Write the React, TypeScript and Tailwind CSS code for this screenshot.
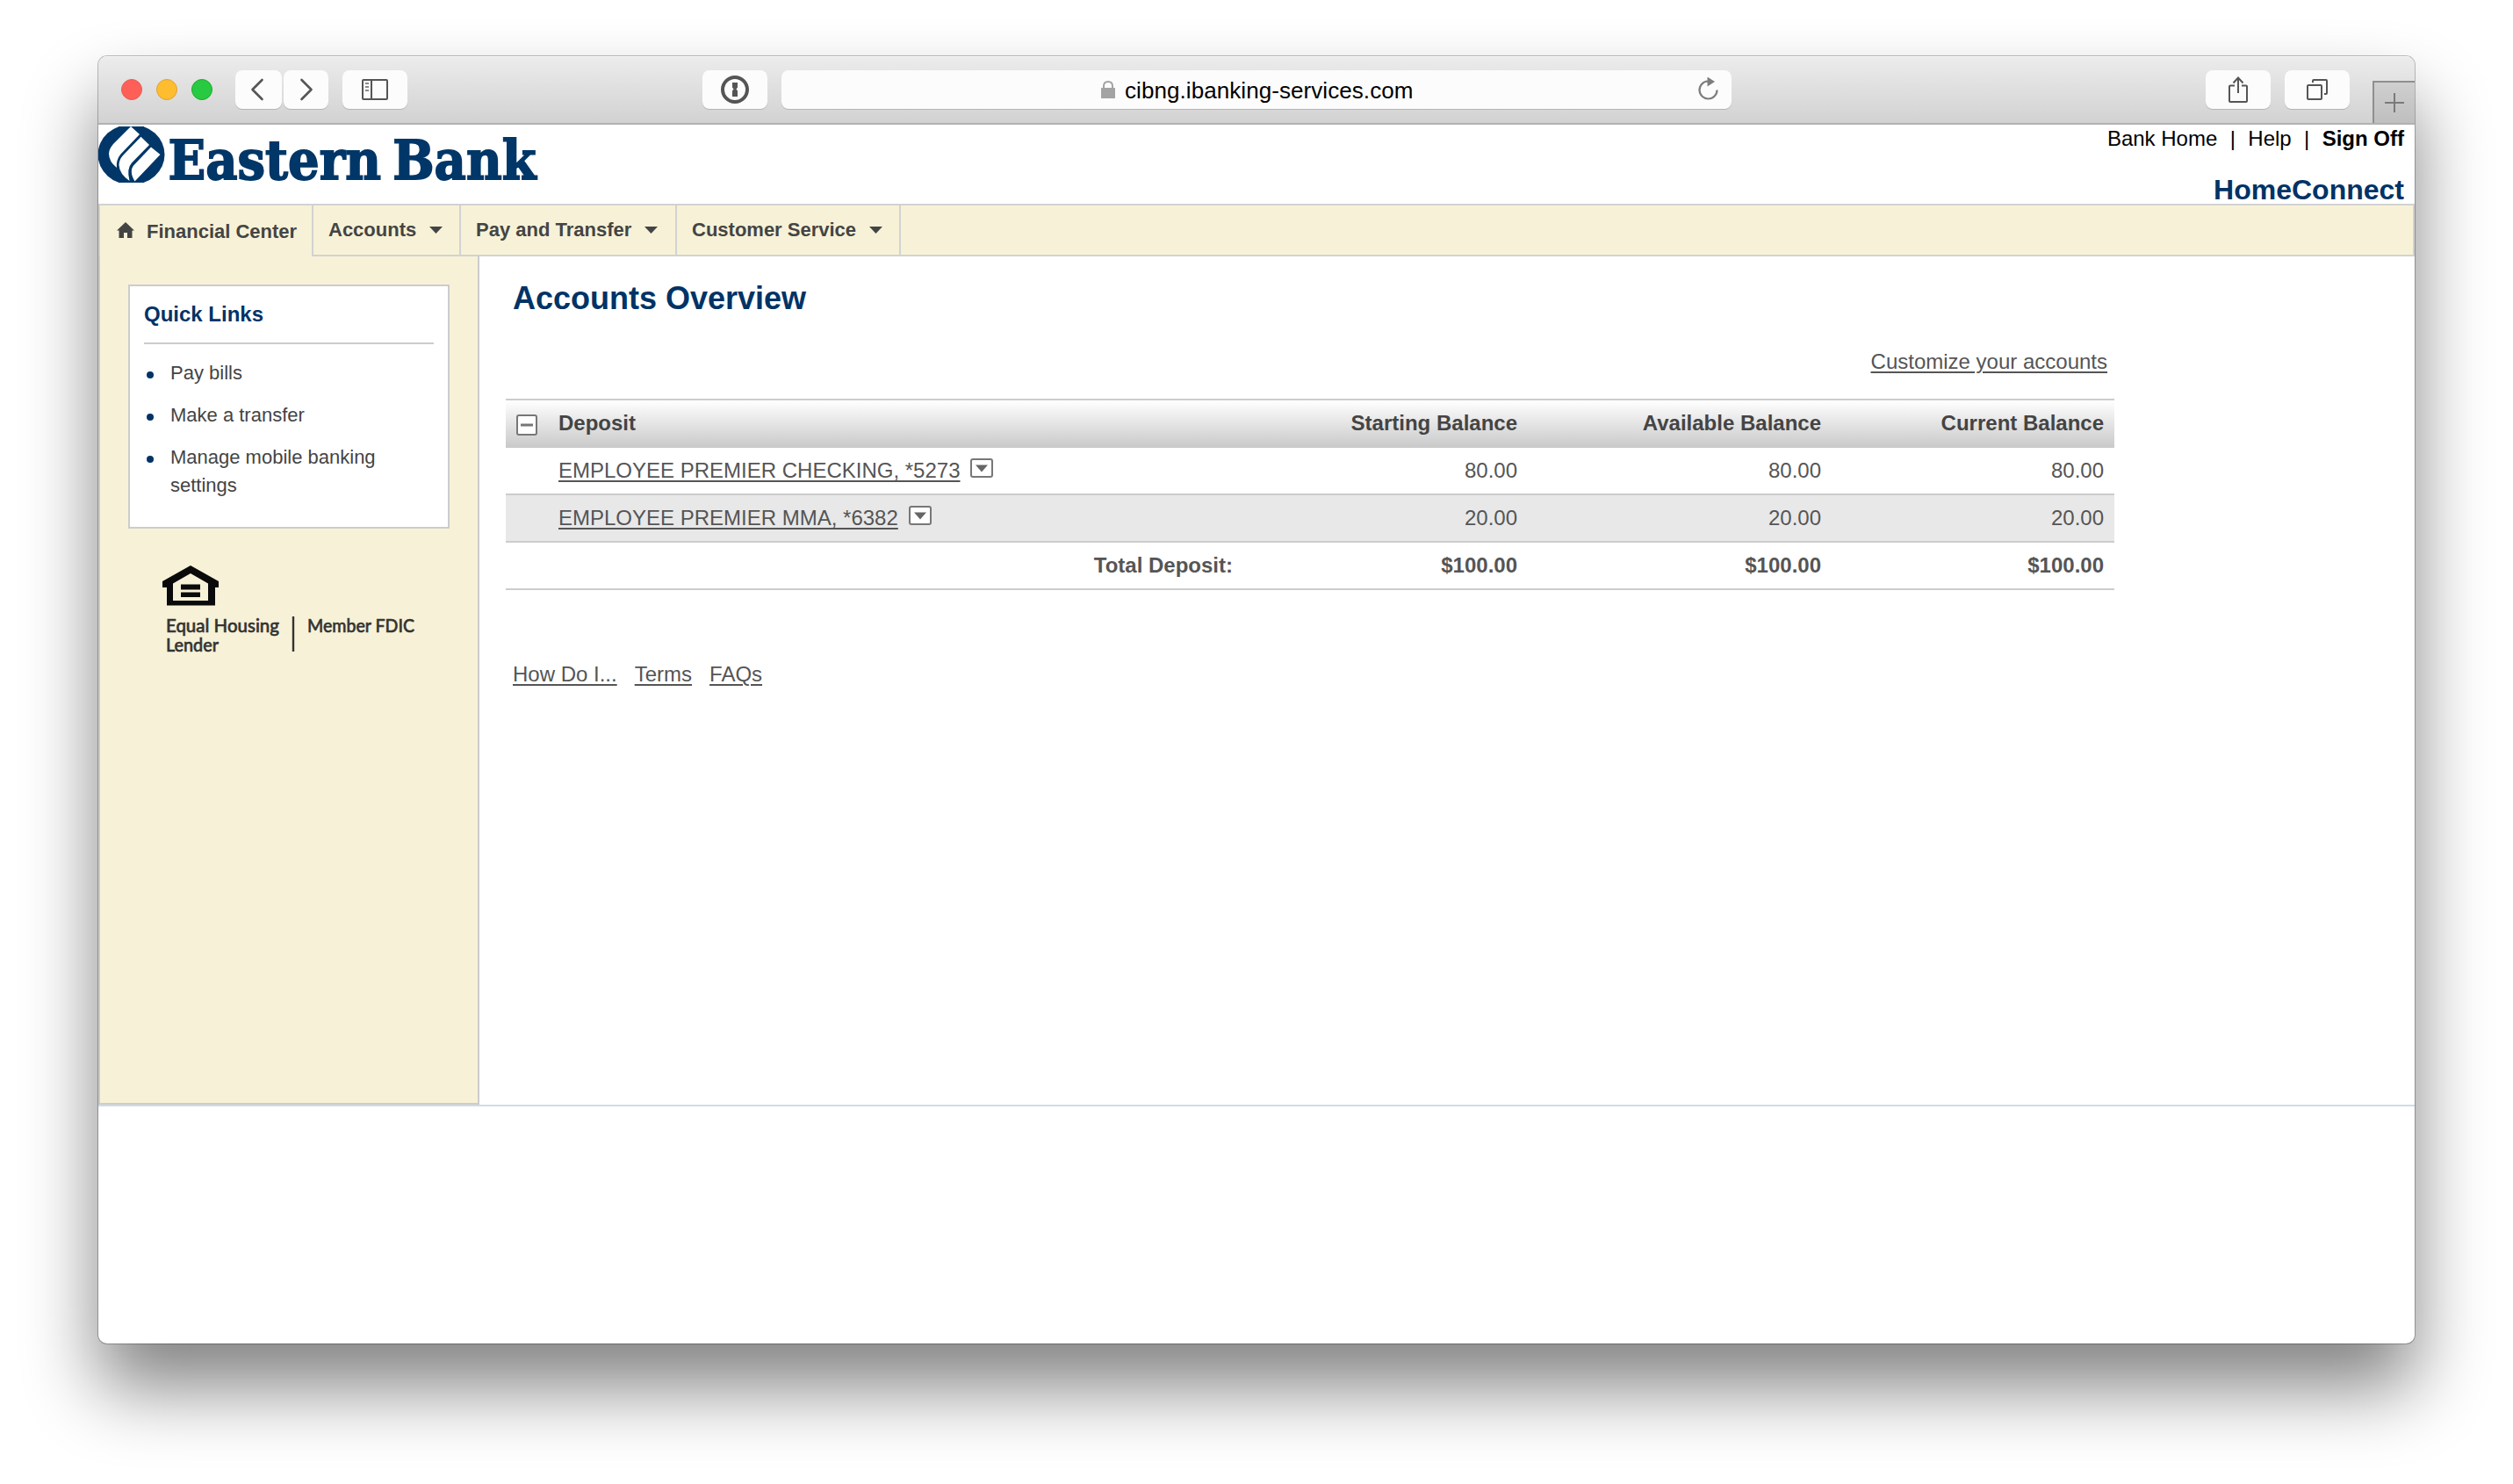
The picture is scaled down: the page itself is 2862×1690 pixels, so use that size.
import type { ReactNode } from "react"
import clsx from "clsx"

const quickLinks = ["Pay bills", "Make a transfer", "Manage mobile banking settings"]

const accounts = [
  { name: "EMPLOYEE PREMIER CHECKING, *5273", starting: "80.00", available: "80.00", current: "80.00" },
  { name: "EMPLOYEE PREMIER MMA, *6382", starting: "20.00", available: "20.00", current: "20.00" },
]

const tableGrid = "grid grid-cols-[840px_324px_346px_322px]"

function ToolbarButton({ className, children }: { className: string; children: ReactNode }) {
  return (
    <button
      className={clsx(
        "flex h-11 items-center justify-center rounded-[8px] bg-[#fcfcfc] shadow-[0_1px_0_#b4b4b4]",
        className
      )}
    >
      {children}
    </button>
  )
}

function Toolbar() {
  return (
    <div className="flex h-[78px] items-start border-b-2 border-[#b1b1b1] bg-gradient-to-b from-[#ececec] to-[#d2d2d2] shadow-[inset_0_1px_0_#f6f6f6]">
      {/* Window controls */}
      <div className="mt-[26px] ml-[26px] flex gap-4">
        <span className="size-6 rounded-full border border-[#ec5a52] bg-[#fe5f57]" />
        <span className="size-6 rounded-full border border-[#dfa236] bg-[#febd2e]" />
        <span className="size-6 rounded-full border border-[#1cab2c] bg-[#28ca41]" />
      </div>

      <div className="mt-4 ml-[26px] flex gap-[2px]">
        <ToolbarButton className="w-[53px] pr-[3px]">
          <svg width="16" height="26" viewBox="0 0 16 26" fill="none" stroke="#555" strokeWidth="2.6" strokeLinecap="round" strokeLinejoin="round">
            <path d="M13.5 2 L2.5 13 L13.5 24" />
          </svg>
        </ToolbarButton>
        <ToolbarButton className="w-[51px]">
          <svg width="16" height="26" viewBox="0 0 16 26" fill="none" stroke="#555" strokeWidth="2.6" strokeLinecap="round" strokeLinejoin="round">
            <path d="M2.5 2 L13.5 13 L2.5 24" />
          </svg>
        </ToolbarButton>
      </div>

      <ToolbarButton className="mt-4 ml-4 w-[74px]">
        <svg width="30" height="24" viewBox="0 0 30 24" fill="none" stroke="#555" strokeWidth="2">
          <rect x="1" y="1" width="28" height="22" rx="1" />
          <path d="M11 1 V23" />
          <path d="M4 5 H8 M4 9 H8 M4 13 H8" stroke="#8a8a8a" />
        </svg>
      </ToolbarButton>

      <ToolbarButton className="mt-4 ml-[336px] w-[74px]">
        <svg width="32" height="32" viewBox="0 0 32 32">
          <circle cx="16" cy="16" r="14" fill="none" stroke="#555" strokeWidth="4" />
          <path d="M13 8 H19 V13.5 L17.5 15.5 L19 17.5 V24 H13 V17.5 L14.5 15.5 L13 13.5 Z" fill="#555" />
        </svg>
      </ToolbarButton>

      {/* Address bar */}
      <div className="mt-4 ml-4 flex h-11 w-[1082px] items-center rounded-[8px] bg-[#fcfcfc] shadow-[0_1px_0_#b4b4b4]">
        <svg className="ml-[364px]" width="16" height="20" viewBox="0 0 16 20">
          <path d="M3 9 V6 Q3 1 8 1 Q13 1 13 6 V9" fill="none" stroke="#a3a3a3" strokeWidth="2" />
          <rect x="0" y="8" width="16" height="12" fill="#a3a3a3" />
        </svg>
        <span className="ml-[11px] w-[640px] pt-[2px] text-[26px] leading-[32px] tracking-[0.07px] text-black">
          cibng.ibanking-services.com
        </span>
        <svg className="ml-[13px]" width="24" height="28" viewBox="0 0 24 28">
          <path d="M11.5 6 A10 10 0 1 0 22 16" transform="translate(-0.5 -1.5)" fill="none" stroke="#7d7d7d" strokeWidth="2.2" />
          <path d="M10.5 -0.5 L19 5 L10.5 10.5 Z" fill="#7d7d7d" />
        </svg>
      </div>

      <ToolbarButton className="mt-4 ml-auto w-[74px]">
        <svg width="22" height="30" viewBox="0 0 22 30" fill="none" stroke="#555" strokeWidth="2">
          <path d="M7 10.5 H2 Q1 10.5 1 11.5 V28 Q1 29 2 29 H20 Q21 29 21 28 V11.5 Q21 10.5 20 10.5 H15" />
          <path d="M11 19 V1.5 M5.5 7.5 L11 1.5 L16.5 7.5" />
        </svg>
      </ToolbarButton>
      <ToolbarButton className="mt-4 ml-4 w-[74px]">
        <svg width="24" height="24" viewBox="0 0 24 24" fill="none" stroke="#555" strokeWidth="2">
          <rect x="1" y="7" width="16" height="16" rx="1" />
          <path d="M7 4 V2 Q7 1 8 1 H22 Q23 1 23 2 V16 Q23 17 22 17 H20" />
        </svg>
      </ToolbarButton>

      {/* New tab */}
      <button className="mt-7 ml-[26px] flex h-12 w-12 items-center justify-center border-t-2 border-l-2 border-[#8f8f8f] bg-gradient-to-b from-[#cfcfcf] to-[#bfbfbf]">
        <svg width="22" height="22" viewBox="0 0 22 22" stroke="#7a7a7a" strokeWidth="2">
          <path d="M11 0 V22 M0 11 H22" />
        </svg>
      </button>
    </div>
  )
}

function BankLogo() {
  return (
    <svg className="mt-[2px] overflow-visible" width="510" height="86" viewBox="0 0 510 86">
      <clipPath id="emblem">
        <rect x="0" y="0" width="76" height="64" />
      </clipPath>
      <g clipPath="url(#emblem)">
        <ellipse cx="37.5" cy="32" rx="38" ry="34.5" fill="#003768" />
        <g fill="#fff">
          <path d="M37 0 L47 9 L25.5 31.5 Q20 38 21 47 Q12 40 12 31 Q12 26 17 20 Z" />
          <path d="M48.5 11.7 L58 21 L38 41.5 Q32 48 35.5 62 Q24 54 23.5 44 Q23.5 38 28 33 Z" />
          <path d="M60 23.5 L70.5 32 L41.5 62.5 Q34 50 41.5 43 Z" />
        </g>
      </g>
      <text
        x="79.5"
        y="60"
        textLength="419"
        lengthAdjust="spacingAndGlyphs"
        stroke="#003768"
        strokeWidth="1.8"
        className="fill-[#003768] font-['DejaVu_Serif',serif] text-[62px] font-bold [word-spacing:-7px]"
      >
        Eastern Bank
      </text>
    </svg>
  )
}

function Caret() {
  return (
    <svg width="15" height="8" viewBox="0 0 15 8" className="shrink-0">
      <path d="M0 0 H15 L7.5 8 Z" fill="#444" />
    </svg>
  )
}

function NavItem({ className, children }: { className: string; children: ReactNode }) {
  return (
    <button className={clsx("flex items-center gap-[15px] border-r-2 border-b-2 border-[#d2d2d2] pb-[1px] font-bold whitespace-nowrap", className)}>
      {children}
      <Caret />
    </button>
  )
}

function NavBar() {
  return (
    <nav className="flex h-[60px] border-t-2 border-[#d2d2d2] bg-[#f7f2d7] text-[22px] leading-[28px] text-[#444]">
      <button className="flex w-[243px] items-center border-l-2 border-[#d2d2d2] pt-[1px] pl-[19px] font-bold whitespace-nowrap">
        <svg width="20" height="18" viewBox="0 0 20 18" className="mb-1">
          <path d="M10 0 L20 9.5 H17.5 V18 H12 V12 H8 V18 H2.5 V9.5 H0 Z" fill="#444" />
        </svg>
        <span className="ml-[14px]">Financial Center</span>
      </button>
      <NavItem className="w-[170px] border-l-2 pl-[17px]">Accounts</NavItem>
      <NavItem className="w-[246px] pl-[17px]">Pay and Transfer</NavItem>
      <NavItem className="w-[255px] pl-[17px]">Customer Service</NavItem>
      <div className="flex-1 border-r-2 border-b-2 border-[#d2d2d2]" />
    </nav>
  )
}

function Sidebar() {
  return (
    <aside className="h-[966px] w-[434px] border-x-2 border-b-2 border-[#ccc] bg-[#f7f2d7] px-8 pt-8">
      <div className="h-[278px] w-[366px] border-2 border-[#ccc] bg-white px-4 pt-4 text-[#444]">
        <h2 className="h-[50px] border-b-2 border-[#ccc] text-2xl leading-8 font-bold text-[#036]">Quick Links</h2>
        <ul className="mt-[17px] flex flex-col gap-4 text-[22px] leading-8">
          {quickLinks.map((link) => (
            <li key={link} className="flex items-start pl-[3px]">
              <span className="mt-[14px] mr-[19px] size-2 shrink-0 rounded-full bg-[#036]" />
              <a>{link}</a>
            </li>
          ))}
        </ul>
      </div>

      {/* Equal housing lender mark */}
      <svg className="mt-[42px] ml-[39px] overflow-visible" width="290" height="112" viewBox="0 0 290 112">
        <path
          fillRule="evenodd"
          fill="#0a0a0a"
          d="M32 0 L64 18 V25 H60 V45.5 H5 V25 H0 V18 Z M32 9 L12 20.5 V40 H52 V20.5 Z"
        />
        <path d="M21 21.5 H43 V27.5 H21 Z M21 30.5 H43 V36 H21 Z" fill="#0a0a0a" />
        <g className="fill-[#333] font-[Lato,sans-serif] text-[22px] font-medium" stroke="#333" strokeWidth="0.6">
          <text x="4" y="76" textLength="129" lengthAdjust="spacingAndGlyphs">Equal Housing</text>
          <text x="4" y="98" textLength="60" lengthAdjust="spacingAndGlyphs">Lender</text>
          <text x="165" y="76" textLength="122" lengthAdjust="spacingAndGlyphs">Member FDIC</text>
        </g>
        <path d="M149 58 V98" stroke="#333" strokeWidth="2.4" />
      </svg>
    </aside>
  )
}

function AccountsTable() {
  return (
    <div className="w-[1832px] border-t-2 border-[#ccc] text-2xl leading-8 text-[#555]">
      <div className={clsx(tableGrid, "h-[54px] items-center bg-gradient-to-b from-white to-[#c9c9c9] pb-[2px] text-right font-bold text-[#444]")}>
        <div className="flex items-center pl-3">
          <svg width="24" height="24" viewBox="0 0 24 24" className="mt-[3px] mr-6">
            <rect x="1" y="1" width="22" height="22" rx="2" fill="#fff" stroke="#777" strokeWidth="2" />
            <path d="M5 12 H19" stroke="#777" strokeWidth="3" />
          </svg>
          Deposit
        </div>
        <div className="pr-3">Starting Balance</div>
        <div className="pr-3">Available Balance</div>
        <div className="pr-3">Current Balance</div>
      </div>
      {accounts.map((account, i) => (
        <div
          key={account.name}
          className={clsx(tableGrid, "h-[54px] items-center border-b-2 border-[#ccc] text-right", i % 2 === 1 && "bg-[#e8e8e8]")}
        >
          <div className="flex items-center pl-[60px]">
            <a className="underline decoration-[1.5px] underline-offset-[3px]">{account.name}</a>
            <svg width="26" height="22" viewBox="0 0 26 22" className="mb-[6px] ml-3">
              <rect x="1" y="1" width="24" height="20" rx="2" fill="#fff" stroke="#777" strokeWidth="2" />
              <path d="M6 7.5 H20 L13 15.5 Z" fill="#666" />
            </svg>
          </div>
          <div className="pr-3">{account.starting}</div>
          <div className="pr-3">{account.available}</div>
          <div className="pr-3">{account.current}</div>
        </div>
      ))}
      <div className={clsx(tableGrid, "h-[54px] items-center border-b-2 border-[#ccc] text-right font-bold")}>
        <div className="pr-3">Total Deposit:</div>
        <div className="pr-3">$100.00</div>
        <div className="pr-3">$100.00</div>
        <div className="pr-3">$100.00</div>
      </div>
    </div>
  )
}

export default function App() {
  return (
    <div className="h-[1690px] w-[2862px] overflow-hidden bg-white px-[112px] pt-16 font-['Liberation_Sans',Arial,sans-serif]">
      <div className="h-[1466px] w-[2638px] overflow-hidden rounded-[10px] bg-white shadow-[0_0_0_1px_rgba(0,0,0,0.25),0_50px_84px_rgba(0,0,0,0.49)]">
        <Toolbar />

        <header className="flex h-[90px] justify-between">
          <BankLogo />
          <div className="flex flex-col items-end pr-3">
            <div className="flex gap-[14.4px] text-2xl leading-8 text-black">
              <a>Bank Home</a>
              <span>|</span>
              <a>Help</a>
              <span>|</span>
              <a className="font-bold">Sign Off</a>
            </div>
            <div className="mt-[25px] text-[32px] leading-[35px] font-bold text-[#036]">HomeConnect</div>
          </div>
        </header>

        <NavBar />

        <div className="flex border-b-2 border-[#ccdcec]">
          <Sidebar />
          <main className="flex-1 pl-[30px]">
            <h1 className="mt-[27px] ml-2 text-4xl leading-[42px] font-bold text-[#036]">Accounts Overview</h1>
            <div className="mt-[35px] mb-[26px] flex w-[1824px] justify-end text-2xl leading-8 text-[#555]">
              <a className="underline decoration-[1.5px] underline-offset-[3px]">Customize your accounts</a>
            </div>
            <AccountsTable />
            <div className="mt-20 ml-2 flex gap-5 text-2xl leading-8 text-[#555]">
              <a className="underline decoration-[1.5px] underline-offset-[3px]">How Do I...</a>
              <a className="underline decoration-[1.5px] underline-offset-[3px]">Terms</a>
              <a className="underline decoration-[1.5px] underline-offset-[3px]">FAQs</a>
            </div>
          </main>
        </div>
      </div>
    </div>
  )
}
